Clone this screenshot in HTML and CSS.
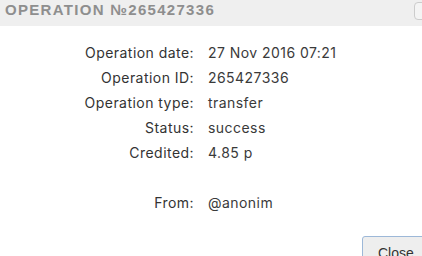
FILE: index.html
```html
<!DOCTYPE html>
<html lang="en">
  <head>
    <meta charset="UTF-8" />
    <title>Operation</title>
    <link rel="stylesheet" href="styles.css">
  </head>
  <body>
    <div class="dialog">
      <div class="dialog-header">
        <span class="dialog-title">Operation №265427336</span>
        <button class="header-btn">&#x2195;</button>
      </div>
      <div class="details">
        <div class="row"><span class="label">Operation date:</span><span class="value">27 Nov 2016 07:21</span></div>
        <div class="row"><span class="label">Operation ID:</span><span class="value">265427336</span></div>
        <div class="row"><span class="label">Operation type:</span><span class="value">transfer</span></div>
        <div class="row"><span class="label">Status:</span><span class="value">success</span></div>
        <div class="row"><span class="label">Credited:</span><span class="value">4.85 р</span></div>
        <div class="row spacer"></div>
        <div class="row"><span class="label">From:</span><span class="value">@anonim</span></div>
      </div>
      <div class="dialog-footer">
        <button class="close-btn">Close</button>
      </div>
    </div>
  </body>
</html>
```

FILE: styles.css
```css
body {
  margin: 0;
  background: #fff;
  font-family: Inter, "Noto Sans", sans-serif;
  overflow: hidden;
}
.dialog {
  width: 422px;
  height: 256px;
  overflow: hidden;
}
.dialog-header {
  height: 26px;
  background-color: #efefef;
  display: flex;
  align-items: flex-start;
  justify-content: space-between;
  padding-left: 5px;
}
.dialog-title {
  font-family: "Liberation Sans", sans-serif;
  font-weight: bold;
  font-size: 15px;
  line-height: 20px;
  text-transform: uppercase;
  letter-spacing: 1.3px;
  color: #8e8e8e;
}
.header-btn {
  width: 20px;
  height: 18px;
  margin-top: 2px;
  margin-right: -12px;
  border: 1px solid #ccc;
  border-radius: 4px;
  background: #f4f4f4;
  font-size: 9px;
  color: #666;
  padding: 0;
}
.details {
  padding-top: 18px;
  font-size: 14px;
  letter-spacing: 0.45px;
}
.row {
  display: flex;
  height: 25px;
  line-height: 18px;
}
.label {
  width: 194px;
  text-align: right;
  color: #333;
}
.value {
  margin-left: 14px;
  color: #3a3a3a;
}
.dialog-footer {
  display: flex;
  justify-content: flex-end;
  padding-top: 17px;
}
.close-btn {
  width: 70px;
  height: 34px;
  margin-right: -10px;
  border: 1px solid #9db8d8;
  border-radius: 3px;
  background: #eee;
  font-family: "Liberation Sans", sans-serif;
  font-size: 14px;
  color: #333;
  text-align: left;
  padding: 0 0 0 15px;
}
```
